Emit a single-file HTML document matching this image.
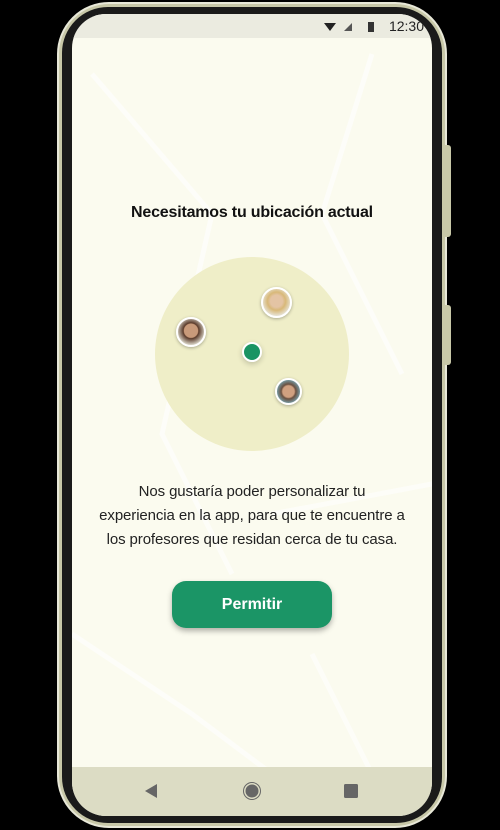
<!DOCTYPE html>
<html><head><meta charset="utf-8"><style>
*{margin:0;padding:0;box-sizing:border-box}
body{width:500px;height:830px;background:#000;position:relative;overflow:hidden;font-family:"Liberation Sans",Roboto,sans-serif}
.frame{position:absolute;left:57px;top:2px;width:390px;height:826px;border-radius:52px;background:#c8c8a8;border:2px solid #e8e8d8}
.bezel{position:absolute;left:62px;top:7px;width:380px;height:816px;border-radius:46px;background:#1a1a1a}
.btn1{position:absolute;left:445px;top:145px;width:6px;height:92px;background:#c8c8a8;border-radius:0 3px 3px 0}
.btn2{position:absolute;left:445px;top:305px;width:6px;height:60px;background:#c8c8a8;border-radius:0 3px 3px 0}
.screen{position:absolute;left:72px;top:14px;width:360px;height:802px;border-radius:34px;overflow:hidden;background:#fbfbef}
.status{position:absolute;left:0;top:0;width:360px;height:24px;background:#ebebe0;font-size:14px;color:#222}
.nav{position:absolute;left:0;bottom:0;width:360px;height:49px;background:#dcdcc4}
.title{position:absolute;top:190px;width:360px;text-align:center;font-weight:bold;font-size:16px;color:#111;letter-spacing:-0.2px}
.circle{position:absolute;left:83px;top:243px;width:194px;height:194px;border-radius:50%;background:#efeec8}
.av{position:absolute;border-radius:50%;border:2px solid #fff;box-shadow:0 1px 3px rgba(0,0,0,.3)}
.dot{position:absolute;left:170px;top:328px;width:20px;height:20px;border-radius:50%;background:#1a9463;border:2px solid #fff;box-shadow:0 2px 6px rgba(0,0,0,.2)}
.para{position:absolute;top:466px;width:360px;text-align:center;font-size:15px;line-height:24px;color:#222;letter-spacing:-0.1px}
.pbtn{position:absolute;left:100px;top:567px;width:160px;height:47px;border-radius:14px;background:#1b9566;color:#fff;font-size:16px;font-weight:bold;text-align:center;line-height:47px;box-shadow:0 3px 6px rgba(0,0,0,.3)}
</style></head><body>
<div class="frame"></div><div class="btn1"></div><div class="btn2"></div>
<div class="bezel"></div>
<div class="screen">
 <svg style="position:absolute;left:0;top:0" width="360" height="802"><g stroke="#fff" stroke-width="5" fill="none" opacity=".6"><path d="M20 60 L140 200 L90 420 L160 560"/><path d="M300 40 L250 200 L330 360"/><path d="M0 620 L120 700 L200 760"/><path d="M240 640 L300 760"/><path d="M200 500 L360 470"/></g></svg>
 <div class="status"><span style="position:absolute;right:8px;top:4px">12:30</span>
  <svg style="position:absolute;left:250px;top:6px" width="60" height="14"><path d="M2 3 L14 3 L8 11Z" fill="#222"/><path d="M22 11 L30 3 L30 11Z" fill="#555"/><rect x="46" y="2" width="6" height="10" fill="#333"/></svg></div>
 <div class="title">Necesitamos tu ubicación actual</div>
 <div class="circle"></div>
 <div class="av" style="left:104px;top:303px;width:30px;height:30px;background:radial-gradient(circle at 50% 45%,#c89a7a 35%,#5a3a2a 40%,#e0ddd0 75%)"></div>
 <div class="av" style="left:189px;top:273px;width:31px;height:31px;background:radial-gradient(circle at 50% 45%,#e4c4a4 30%,#d8b878 45%,#e8e6dc 75%)"></div>
 <div class="av" style="left:203px;top:364px;width:27px;height:27px;background:radial-gradient(circle at 50% 50%,#d0a080 35%,#6a5040 45%,#7ab0c0 80%)"></div>
 <div class="dot"></div>
 <div class="para">Nos gustaría poder personalizar tu<br>experiencia en la app, para que te encuentre a<br>los profesores que residan cerca de tu casa.</div>
 <div class="pbtn">Permitir</div>
 <div class="nav"><svg width="360" height="49"><path d="M73 24 L85 17 L85 31Z" fill="#666"/><circle cx="180" cy="24" r="7" fill="#666" stroke="#dcdcc4" stroke-width="1"/><circle cx="180" cy="24" r="8.5" fill="none" stroke="#666" stroke-width="1"/><rect x="272" y="17" width="14" height="14" rx="1.5" fill="#666"/></svg></div>
</div>
</body></html>
